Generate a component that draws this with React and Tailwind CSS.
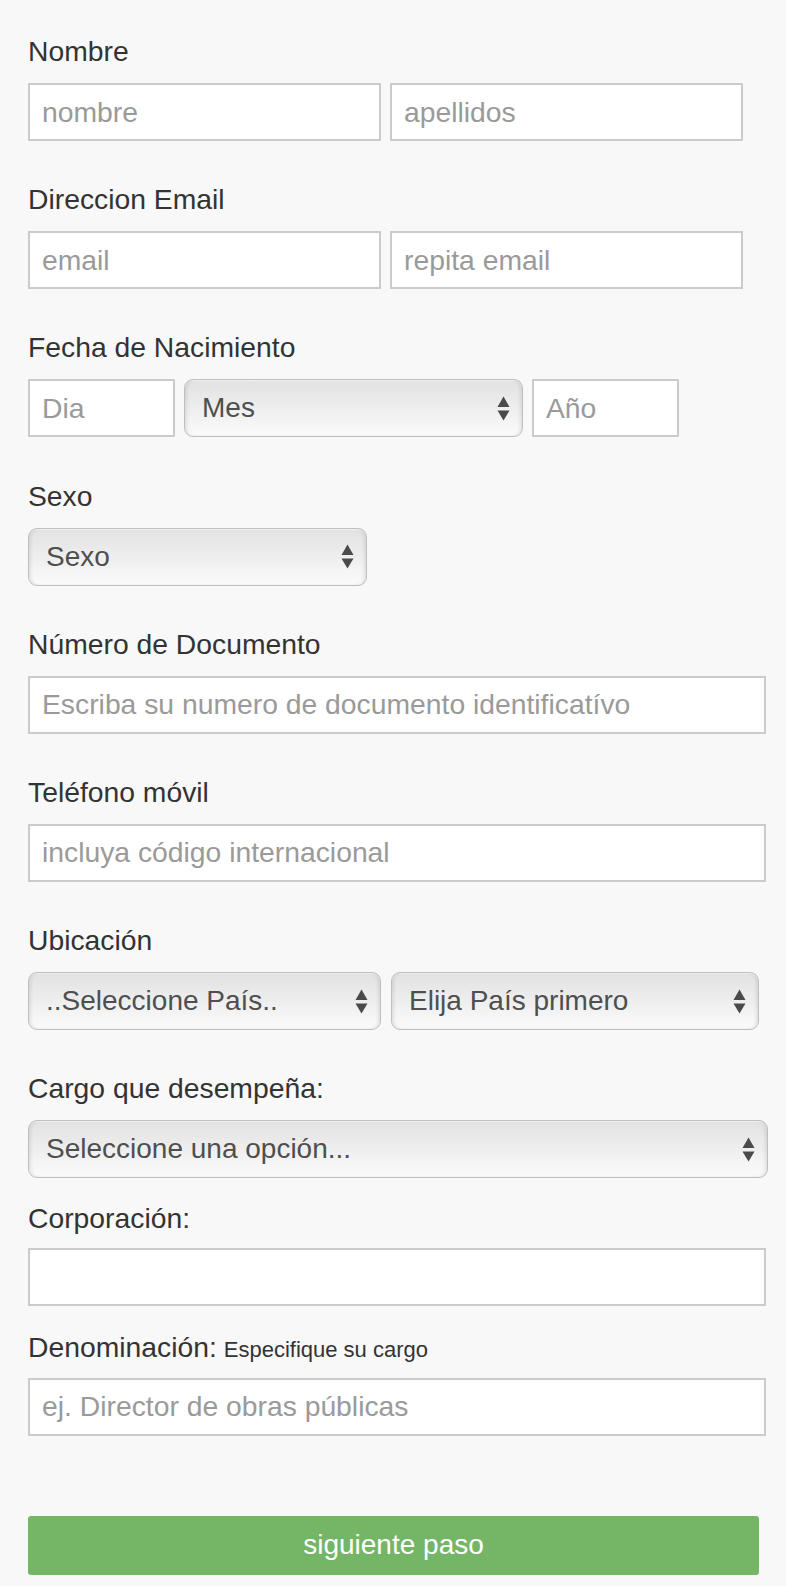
import React from "react";

const font = { fontFamily: '"Liberation Sans", Arial, Helvetica, sans-serif' };

function Arrows() {
  return (
    <svg width="13" height="25" viewBox="0 0 13 25" className="shrink-0">
      <path d="M6.5 0.5 L12.5 11 L0.5 11 Z" fill="#4a4a4a" />
      <path d="M6.5 24.5 L12.5 14.5 L0.5 14.5 Z" fill="#4a4a4a" />
    </svg>
  );
}

function Input({ w, placeholder }) {
  return (
    <input
      type="text"
      placeholder={placeholder}
      className={`${w} h-[58px] shrink-0 border-2 border-[#cbcbcb] bg-white px-[12px] text-[28.3px] text-[#555] placeholder:text-[#9a9a9a] outline-none`}
      style={font}
    />
  );
}

function Select({ w, text }) {
  return (
    <div
      className={`${w} h-[58px] shrink-0 flex items-center justify-between rounded-[9px] border border-[#bfbfbf] bg-gradient-to-b from-[#e2e2e2] via-[#eeeeee] to-[#fbfbfb] pl-[17px] pr-[12px] shadow-[inset_3px_0_4px_-2px_rgba(0,0,0,0.13),inset_-3px_0_4px_-2px_rgba(0,0,0,0.13),inset_0_1px_1px_rgba(255,255,255,0.8)] text-[28px] text-[#4f4f4f]`}
    >
      <span className="leading-none">{text}</span>
      <Arrows />
    </div>
  );
}

function Label({ children, extra }) {
  return (
    <div className="h-[32px] leading-[32px] text-[28.3px] text-[#333]">
      {children}
      {extra && <span className="text-[22px] ml-[7px]">{extra}</span>}
    </div>
  );
}

export default function App() {
  return (
    <div className="min-h-screen w-full bg-[#f8f8f8] pt-[35px] pl-[28px] pb-[10px]" style={font}>
      <div className="mb-[42.2px]">
        <Label>Nombre</Label>
        <div className="mt-[16px] flex gap-[9px]">
          <Input w="w-[353px]" placeholder="nombre" />
          <Input w="w-[353px]" placeholder="apellidos" />
        </div>
      </div>

      <div className="mb-[42.2px]">
        <Label>Direccion Email</Label>
        <div className="mt-[16px] flex gap-[9px]">
          <Input w="w-[353px]" placeholder="email" />
          <Input w="w-[353px]" placeholder="repita email" />
        </div>
      </div>

      <div className="mb-[42.2px]">
        <Label>Fecha de Nacimiento</Label>
        <div className="mt-[16px] flex gap-[9px] items-center">
          <Input w="w-[147px]" placeholder="Dia" />
          <Select w="w-[339px]" text="Mes" />
          <Input w="w-[147px]" placeholder="Año" />
        </div>
      </div>

      <div className="mb-[42.2px]">
        <Label>Sexo</Label>
        <div className="mt-[16px] flex">
          <Select w="w-[339px]" text="Sexo" />
        </div>
      </div>

      <div className="mb-[42.2px]">
        <Label>Número de Documento</Label>
        <div className="mt-[16px] flex">
          <Input w="w-[738px]" placeholder="Escriba su numero de documento identificatívo" />
        </div>
      </div>

      <div className="mb-[42.2px]">
        <Label>Teléfono móvil</Label>
        <div className="mt-[16px] flex">
          <Input w="w-[738px]" placeholder="incluya código internacional" />
        </div>
      </div>

      <div className="mb-[42.2px]">
        <Label>Ubicación</Label>
        <div className="mt-[16px] flex gap-[10px]">
          <Select w="w-[353px]" text="..Seleccione País.." />
          <Select w="w-[368px]" text="Elija País primero" />
        </div>
      </div>

      <div className="mb-[24px]">
        <Label>Cargo que desempeña:</Label>
        <div className="mt-[16px] flex">
          <Select w="w-[740px]" text="Seleccione una opción..." />
        </div>
      </div>

      <div className="mb-[25.4px]">
        <Label>Corporación:</Label>
        <div className="mt-[13.2px] flex">
          <Input w="w-[738px]" placeholder="" />
        </div>
      </div>

      <div>
        <Label extra="Especifique su cargo">Denominación:</Label>
        <div className="mt-[15px] flex">
          <Input w="w-[738px]" placeholder="ej. Director de obras públicas" />
        </div>
      </div>

      <div className="mt-[80px] flex">
        <button className="w-[731px] h-[59px] rounded-[3px] bg-[#74b566] text-white text-[28px]" style={font}>
          siguiente paso
        </button>
      </div>
    </div>
  );
}
